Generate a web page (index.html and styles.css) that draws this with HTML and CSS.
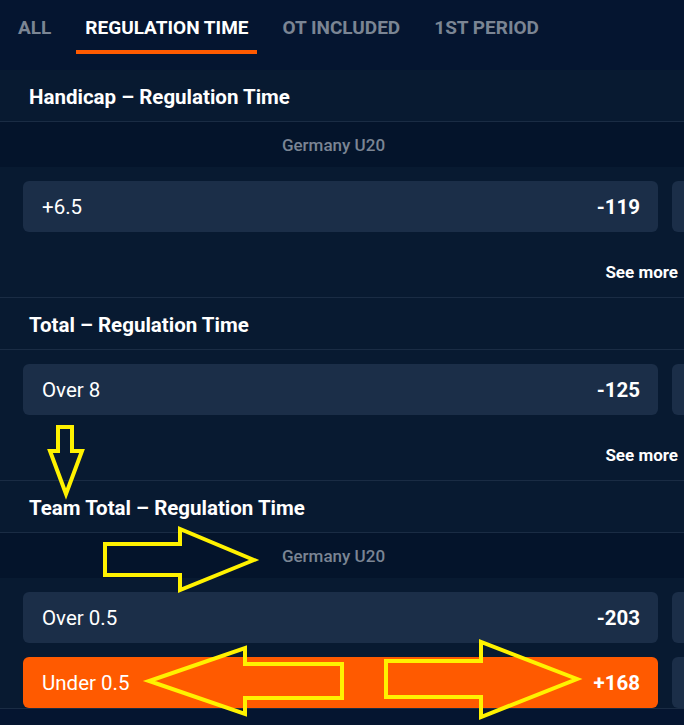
FILE: index.html
```html
<!DOCTYPE html>
<html lang="en">
  <head>
    <meta charset="UTF-8" />
    <meta name="viewport" content="width=device-width, initial-scale=1.0" />
    <title>Markets</title>
    <link rel="stylesheet" href="styles.css">
  </head>
  <body>
    <div class="page">
      <nav class="tabs">
        <a class="tab">ALL</a>
        <a class="tab active">REGULATION TIME</a>
        <a class="tab">OT INCLUDED</a>
        <a class="tab">1ST PERIOD</a>
      </nav>

      <section class="market">
        <div class="market-title">Handicap – Regulation Time</div>
        <div class="team-row">
          <div class="team-name">Germany U20</div>
          <div class="team-name">Czechia U20</div>
        </div>
        <div class="market-body">
          <div class="odds-grid">
            <div class="odd"><span class="odd-label">+6.5</span><span class="odd-price">-119</span></div>
            <div class="odd"><span class="odd-label">-6.5</span><span class="odd-price">-111</span></div>
          </div>
          <div class="see-more">See more</div>
        </div>
      </section>

      <section class="market">
        <div class="market-title">Total – Regulation Time</div>
        <div class="market-body">
          <div class="odds-grid">
            <div class="odd"><span class="odd-label">Over 8</span><span class="odd-price">-125</span></div>
            <div class="odd"><span class="odd-label">Under 8</span><span class="odd-price">-105</span></div>
          </div>
          <div class="see-more">See more</div>
        </div>
      </section>

      <section class="market">
        <div class="market-title">Team Total – Regulation Time</div>
        <div class="team-row">
          <div class="team-name">Germany U20</div>
          <div class="team-name">Czechia U20</div>
        </div>
        <div class="market-body">
          <div class="odds-grid">
            <div class="odd"><span class="odd-label">Over 0.5</span><span class="odd-price">-203</span></div>
            <div class="odd"><span class="odd-label">Over 7.5</span><span class="odd-price">-110</span></div>
            <div class="odd selected"><span class="odd-label">Under 0.5</span><span class="odd-price">+168</span></div>
            <div class="odd"><span class="odd-label">Under 7.5</span><span class="odd-price">-120</span></div>
          </div>
        </div>
      </section>

      <!-- annotation arrows drawn over the screenshot -->
      <svg class="marks" width="684" height="725" viewBox="0 0 684 725">
        <polygon points="58,427 72,427 72,451 82,451 66,494 50,451 58,451" />
        <polygon points="105,544 180,544 180,529 254,560 180,590 180,575 105,575" />
        <polygon points="342,664 245,664 245,648 149,681 245,714 245,698 342,698" />
        <polygon points="386,661 481,661 481,642 577,679 481,717 481,697 386,697" />
      </svg>
    </div>
  </body>
</html>
```

FILE: styles.css
```css
* {
  margin: 0;
  padding: 0;
  box-sizing: border-box;
}

body {
  font-family: Roboto, "Noto Sans", sans-serif;
  background: #051530;
  color: #ffffff;
  overflow: hidden;
}

.page {
  position: relative;
  width: 684px;
  height: 725px;
  overflow: hidden;
}

.tabs {
  display: flex;
  gap: 16px;
  height: 70px;
  padding: 0 0 0 9px;
  background: #051530;
}

.tab {
  display: flex;
  align-items: flex-start;
  padding: 16px 9px 0;
  height: 54px;
  font-size: 19px;
  font-weight: 700;
  color: #7b8594;
  border-bottom: 4px solid transparent;
  white-space: nowrap;
}

.tab.active {
  color: #ffffff;
  border-bottom-color: #ff5a00;
}

.market {
  background: #081a31;
  border-bottom: 1px solid #1a2c44;
}

.market-title {
  height: 52px;
  display: flex;
  align-items: center;
  padding: 3px 0 0 29px;
  font-size: 20.5px;
  font-weight: 700;
  border-bottom: 1px solid #1a2c44;
}

.team-row {
  display: grid;
  grid-template-columns: 635px 635px;
  gap: 14px;
  height: 45px;
  align-items: center;
  padding-left: 23px;
  background: #04142b;
}

.team-name {
  text-align: center;
  padding: 1px 14px 0 0;
  font-size: 17px;
  font-weight: 500;
  color: #7b8594;
}

.market-body {
  padding: 14px 0 0 23px;
}

.odds-grid {
  display: grid;
  grid-template-columns: 635px 635px;
  gap: 14px;
}

.odd {
  display: flex;
  justify-content: space-between;
  align-items: center;
  height: 51px;
  padding: 0 18px 0 19px;
  border-radius: 6px;
  background: #1b2e48;
  font-size: 20.5px;
}

.odd.selected {
  background: #ff5a00;
}

.odd-price {
  font-weight: 700;
}

.see-more {
  margin-top: 30px;
  padding: 0 6px 15px 0;
  line-height: 20px;
  text-align: right;
  font-size: 17px;
  font-weight: 700;
}

.marks {
  position: absolute;
  top: 0;
  left: 0;
  pointer-events: none;
}

.marks polygon {
  fill: none;
  stroke: #fff200;
  stroke-width: 4;
  stroke-linejoin: miter;
}
```
